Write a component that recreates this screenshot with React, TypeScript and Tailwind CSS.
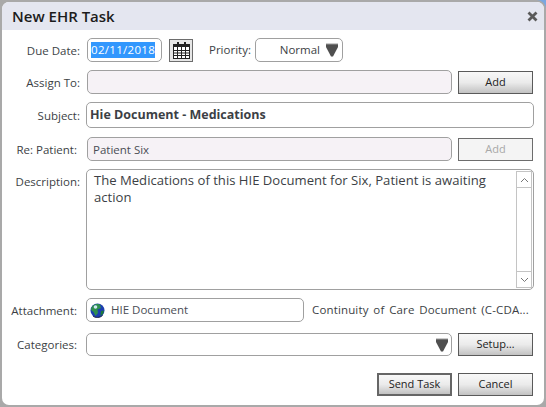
const fontStack = "font-['Open_Sans','Noto_Sans',sans-serif]";

function Label({ text, className = '' }: { text: string; className?: string }) {
  return <div className={`w-[80px] shrink-0 pt-[1px] text-right text-[11.5px] leading-[16px] text-[#3c3f45] ${className}`}>{text}</div>;
}

function Btn({ text, disabled, strong }: { text: string; disabled?: boolean; strong?: boolean }) {
  const look = disabled
    ? 'border border-[#6d6d6d] bg-[#f4f4f4] text-[#a8a8a8]'
    : strong
      ? 'border-2 border-[#666666] bg-gradient-to-b from-[#f8f8f8] via-[#ebebeb] to-[#c2c2c2] text-[#222222]'
      : 'border border-[#5a5a5a] bg-gradient-to-b from-[#f8f8f8] via-[#ebebeb] to-[#c2c2c2] text-[#222222]';
  return <div className={`flex h-[23px] w-[75px] shrink-0 items-center justify-center text-[11px] ${look}`}>{text}</div>;
}

function Triangle() {
  return (
    <svg width="12" height="14" viewBox="0 0 12 14" className="shrink-0">
      <path d="M0 1H12V4L7 13.5H5L0 4Z" fill="#4f4f4f" />
      <rect x="0" y="0.5" width="12" height="1" fill="#9a9a9a" />
    </svg>
  );
}

function CalendarIcon() {
  return (
    <svg width="17" height="17" viewBox="0 0 17 17">
      <rect x="0.5" y="2.5" width="16" height="14" fill="#fff" stroke="#222" />
      <rect x="0" y="2" width="17" height="3" fill="#222" />
      <rect x="4" y="0" width="2" height="3" fill="#222" />
      <rect x="11" y="0" width="2" height="3" fill="#222" />
      <path d="M1 8.5H16M1 11H16M1 13.5H16M4.5 5V16M8.5 5V16M12.5 5V16" stroke="#222" strokeWidth="1" />
    </svg>
  );
}

function CloseIcon() {
  return (
    <svg width="11" height="11" viewBox="0 0 11 11">
      <path d="M1.5 1.5L9.5 9.5M9.5 1.5L1.5 9.5" stroke="#5a5a5a" strokeWidth="2.8" />
    </svg>
  );
}

function Globe() {
  return (
    <svg width="15" height="15" viewBox="0 0 15 15" className="shrink-0">
      <circle cx="7.5" cy="7.5" r="7" fill="#1c3fb0" />
      <path d="M3 2.5C5 1 8 0.5 10 1.5L11 5L7.5 6.5L8 10L5.5 13L3.5 9L1 7C1 5 2 3.5 3 2.5Z" fill="#2f8f4e" />
      <path d="M11 8L14 7.5L13 11L10.5 13Z" fill="#1d7a3a" />
      <circle cx="5.5" cy="4" r="1.8" fill="#cfe8f2" />
      <path d="M3 13C5 15 10 15 12.5 12.5" stroke="#101840" fill="none" />
    </svg>
  );
}

export default function App() {
  return (
    <div className="h-[407px] w-[546px] overflow-hidden bg-[#7aa7e0]">
      <div className={`h-[407px] w-[546px] overflow-hidden rounded-tr-[9px] bg-[#a9a9a9] pt-[2px] ${fontStack}`}>
        <div className="mx-[2px] h-[403px] overflow-hidden rounded-[7px] bg-white">
          <div className="flex h-[28px] items-center justify-between bg-[#e4e6f0] pl-[10px] pr-[6px]">
            <span className="text-[15px] font-semibold leading-[28px] text-[#1c1c1c]">New EHR Task</span>
            <CloseIcon />
          </div>

          <div className="flex flex-col pl-[5px]">
            <div className="mt-[8px] flex h-[24px] items-center">
              <Label text="Due Date:" className="pr-[7px]" />
              <div className="flex h-[24px] w-[75px] items-center rounded-[5px] border border-[#a0a0a0] pl-[3px] text-[11.5px]">
                <span className="bg-[#3297fd] leading-[16px] tracking-[0.3px] text-white">02/11/2018</span>
              </div>
              <div className="ml-[7px] flex h-[23px] w-[24px] items-center justify-center border border-[#6d6d6d] bg-[#e6e6e6]">
                <CalendarIcon />
              </div>
              <div className="ml-[16px] w-[46px] text-[11.5px] text-[#3c3f45]">Priority:</div>
              <div className="flex h-[24px] w-[88px] items-center justify-end rounded-[5px] border border-[#a0a0a0] pr-[4px] text-[11.5px] text-[#3c3f45]">
                <span className="mr-[6px]">Normal</span>
                <Triangle />
              </div>
            </div>

            <div className="mt-[8px] flex h-[24px] items-center">
              <Label text="Assign To:" className="pr-[7px]" />
              <div className="h-[24px] w-[365px] rounded-[5px] border border-[#a0a0a0] bg-[#f6f2f6]" />
              <div className="ml-[6px]"><Btn text="Add" /></div>
            </div>

            <div className="mt-[8px] flex h-[26px] items-center">
              <Label text="Subject:" className="pr-[7px]" />
              <div className="-ml-[1px] flex h-[26px] w-[448px] items-center rounded-[5px] border border-[#a0a0a0] pl-[3px] pt-[1px] text-[12.5px] font-bold text-[#3c3f45]">
                Hie Document - Medications
              </div>
            </div>

            <div className="mt-[9px] flex h-[24px] items-center">
              <Label text="Re: Patient:" className="pr-[10px]" />
              <div className="flex h-[24px] w-[365px] items-center rounded-[5px] border border-[#a0a0a0] bg-[#f6f2f6] pl-[5px] pt-[1px] text-[11.5px] text-[#4a4d55]">
                Patient Six
              </div>
              <div className="ml-[6px]"><Btn text="Add" disabled /></div>
            </div>

            <div className="mt-[8px] flex items-start">
              <Label text="Description:" className="mt-[4px] pr-[7px]" />
              <div className="-ml-[1px] flex h-[121px] w-[448px] rounded-[5px] border border-[#a0a0a0]">
                <div className="flex-1 pl-[7px] pt-[2px] text-[13.1px] leading-[17px] text-[#3c3f45]">
                  The Medications of this HIE Document for Six, Patient is awaiting action
                </div>
                <div className="mb-[1px] mr-[1px] mt-[1px] flex w-[16px] flex-col justify-between border border-[#c4c4c4] text-[#777777]">
                  <div className="flex h-[16px] items-center justify-center border-b border-[#c4c4c4]">
                    <svg width="9" height="6" viewBox="0 0 9 6"><path d="M1 5L4.5 1.5L8 5" fill="none" stroke="currentColor" /></svg>
                  </div>
                  <div className="flex h-[16px] items-center justify-center border-t border-[#c4c4c4]">
                    <svg width="9" height="6" viewBox="0 0 9 6"><path d="M1 1L4.5 4.5L8 1" fill="none" stroke="currentColor" /></svg>
                  </div>
                </div>
              </div>
            </div>

            <div className="mt-[8px] flex h-[24px] items-center">
              <Label text="Attachment:" className="pr-[10px]" />
              <div className="-ml-[1px] flex h-[24px] w-[218px] items-center rounded-[5px] border border-[#a0a0a0] pl-[3px] text-[11.5px] text-[#4a4d55]">
                <Globe />
                <span className="ml-[6px]">HIE Document</span>
              </div>
              <div className="ml-[8px] text-[11.5px] tracking-[0.15px] text-[#3c3f45] [word-spacing:1.6px]">Continuity of Care Document (C-CDA...</div>
            </div>

            <div className="mt-[11px] flex h-[23px] items-center">
              <Label text="Categories:" className="pr-[10px]" />
              <div className="-ml-[1px] flex h-[23px] w-[366px] items-center justify-end rounded-[5px] border border-[#a0a0a0] pr-[3px]">
                <Triangle />
              </div>
              <div className="ml-[6px]"><Btn text="Setup…" /></div>
            </div>

            <div className="mt-[17px] flex justify-end gap-[6px] pr-[11px]">
              <Btn text="Send Task" strong />
              <Btn text="Cancel" />
            </div>
          </div>
        </div>
      </div>
    </div>
  );
}
